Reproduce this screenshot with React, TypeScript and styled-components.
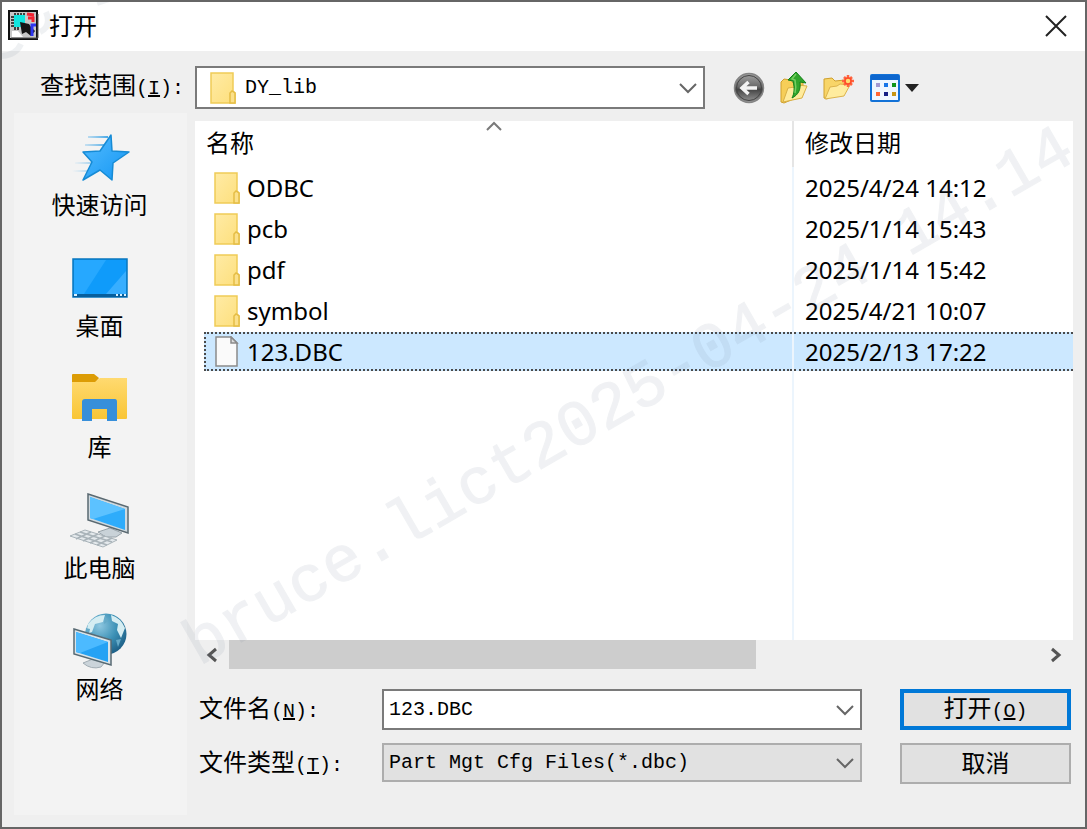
import React, { useState } from "react";
import styled, { createGlobalStyle, css } from "styled-components";

const uiFont = `"Noto Sans", "Noto Sans CJK SC", sans-serif`;
const monoFont = `"Liberation Mono", "Noto Sans CJK SC", monospace`;

const GlobalStyle = createGlobalStyle`
  *, *::before, *::after { box-sizing: border-box; }
  body { margin: 0; font-family: ${uiFont}; font-size: 24px; color: #000; }
  button, input, select { font: inherit; color: inherit; margin: 0; border-radius: 0; }
`;

const DialogFrame = styled.main`
  position: relative;
  display: flex;
  flex-direction: column;
  min-height: 100vh;
  background: #efefef;
  border: 2px solid #666;
  overflow: hidden;
`;

const TitleBar = styled.header`
  display: flex;
  align-items: center;
  height: 49px;
  padding: 0 18px 2px 6px;
  background: #fff;
`;

const Title = styled.h1`
  flex: 1;
  margin: 0 0 0 10px;
  font-size: 24px;
  font-weight: 400;
  line-height: 32px;
`;

const IconButton = styled.button`
  display: flex;
  align-items: center;
  justify-content: center;
  padding: 0;
  border: 0;
  background: none;
`;

const DialogBody = styled.div`
  display: flex;
  flex: 1;
  flex-direction: column;
  gap: 4px;
  padding: 15px 12px 12px;
`;

const LookInRow = styled.div`
  display: grid;
  grid-template-columns: 173px minmax(0, 1fr) 360px;
  column-gap: 8px;
  height: 43px;
`;

const FieldLabel = styled.label<{ $indent: number }>`
  height: 40px;
  padding-left: ${(p) => p.$indent}px;
  font-family: ${monoFont};
  font-size: 24px;
  line-height: 44px;
  white-space: nowrap;
`;

const Latin = styled.span`
  font-size: 20px;
`;

const ComboBox = styled.div<{ $readOnly?: boolean; $height: number }>`
  position: relative;
  display: flex;
  align-items: center;
  min-width: 0;
  height: ${(p) => p.$height}px;
  border: 2px solid ${(p) => (p.$readOnly ? "#adadad" : "#7a7a7a")};
  background: ${(p) => (p.$readOnly ? "#e1e1e1" : "#fff")};
`;

const comboText = css`
  flex: 1;
  min-width: 0;
  height: 100%;
  padding: 0 40px 0 5px;
  border: 0;
  outline: 0;
  background: transparent;
  appearance: none;
  font-family: ${monoFont};
  font-size: 20px;
`;

const ComboSelect = styled.select`
  ${comboText}
`;

const ComboInput = styled.input`
  ${comboText}
`;

const ComboArrow = styled.span`
  position: absolute;
  right: 6px;
  display: flex;
  pointer-events: none;
`;

const ComboIcon = styled.span`
  display: flex;
  padding: 0 4px 0 13px;
`;

const Toolbar = styled.div`
  display: flex;
  align-items: center;
  gap: 15px;
  padding-left: 20px;
`;

const Columns = styled.div`
  display: grid;
  flex: 1;
  grid-template-columns: 173px minmax(0, 1fr);
  column-gap: 8px;
`;

const Places = styled.nav`
  display: flex;
  flex-direction: column;
  gap: 25px;
  padding: 14px 2px 0 0;
  background: #f3f3f3;
`;

const Place = styled.button`
  display: flex;
  flex-direction: column;
  align-items: center;
  padding: 0;
  border: 0;
  background: none;
  line-height: 36px;
`;

const Content = styled.section`
  display: flex;
  flex-direction: column;
  min-width: 0;
  padding-top: 8px;
`;

const FileList = styled.div`
  display: flex;
  min-height: 519px;
  background: #fff;
`;

const FileTable = styled.table`
  width: 100%;
  border-collapse: separate;
  border-spacing: 0;
  table-layout: fixed;
`;

const HeaderCell = styled.th<{ $width: string; $divided?: boolean }>`
  position: relative;
  width: ${(p) => p.$width};
  height: 46px;
  padding: 0 11px;
  border-left: ${(p) => (p.$divided ? "2px solid #e5e5e5" : "0")};
  font-weight: 400;
  line-height: 44px;
  text-align: left;
  vertical-align: top;
`;

const SortMark = styled.span`
  position: absolute;
  top: 0;
  left: 0;
  display: flex;
  justify-content: center;
  width: 100%;
`;

const NameCell = styled.td`
  height: 41px;
  padding: 0 0 0 9px;
`;

const DateCell = styled.td`
  height: 41px;
  padding: 0;
  border-left: 2px solid #ecf5fd;
`;

const CellBox = styled.div<{ $selected: boolean; $first?: boolean }>`
  display: flex;
  align-items: center;
  gap: 7px;
  height: 39px;
  padding-left: ${(p) => (p.$first ? 10 : 11)}px;
  background: ${(p) => (p.$selected ? "#cce8ff" : "transparent")};
  white-space: nowrap;
  ${(p) =>
    p.$selected &&
    css`
      border-top: 2px dotted #4a4a4a;
      border-bottom: 2px dotted #4a4a4a;
    `}
  ${(p) =>
    p.$selected &&
    p.$first &&
    css`
      padding-left: 8px;
      border-left: 2px dotted #4a4a4a;
    `}
`;

const FillCell = styled.td<{ $divided?: boolean }>`
  padding: 0;
  border-left: ${(p) => (p.$divided ? "2px solid #ecf5fd" : "0")};
`;

const ScrollBar = styled.div`
  display: flex;
  height: 29px;
`;

const ScrollArrow = styled(IconButton)`
  width: 34px;
`;

const ScrollTrack = styled.div`
  flex: 1;
`;

const ScrollThumb = styled.div`
  width: 65%;
  height: 100%;
  background: #cdcdcd;
`;

const FileForm = styled.form`
  display: grid;
  grid-template-columns: 187px minmax(0, 1fr) 209px;
  row-gap: 13px;
  padding: 20px 2px 0 0;
`;

const ActionButton = styled.button<{ $primary?: boolean }>`
  height: 41px;
  margin-left: 38px;
  padding: 4px 0 0;
  border: ${(p) => (p.$primary ? "4px solid #0078d7" : "2px solid #adadad")};
  background: #e1e1e1;
  font-family: ${monoFont};
  font-size: 24px;
  line-height: 28px;
`;

const Watermark = styled.div`
  position: absolute;
  top: 48%;
  left: 58%;
  transform: translate(-50%, -50%) rotate(-30deg);
  color: #64738c;
  -webkit-text-stroke: 1px #64738c;
  opacity: 0.09;
  font-family: "Liberation Mono", monospace;
  font-size: 65px;
  line-height: 72px;
  white-space: nowrap;
  pointer-events: none;
`;

const WatermarkTail = styled.svg`
  position: absolute;
  top: 0;
  left: 0;
  pointer-events: none;
`;

const AppIcon = () => (
  <svg width="31" height="31" viewBox="0 0 31 31" aria-hidden="true">
    <rect x="1" y="1" width="28" height="28" fill="#c8c8c8" stroke="#111" strokeWidth="2" />
    <path d="M3 28h27V4" fill="none" stroke="#555" strokeWidth="1" />
    <path d="M4 21h6l5 6H4z" fill="#fff" />
    <path d="M7 3v3M10 3v3M13 3v3M16 3v3M3 7h3M3 10h3M3 13h3M3 16h3M7 17v3M10 17v3" stroke="#111" strokeWidth="1.5" />
    <rect x="6" y="5" width="11" height="12" fill="#10e5df" />
    <path d="M12 12l9 2 2 3 4 4-4 5-5-4-4 2z" fill="#151515" />
    <path d="M19 4l7 1M20 8h5v4" fill="none" stroke="#f32231" strokeWidth="3" />
    <path d="M28 15h-4v11" fill="none" stroke="#2d36ef" strokeWidth="3" />
  </svg>
);

const CloseIcon = () => (
  <svg width="22" height="22" viewBox="0 0 22 22" aria-hidden="true">
    <path d="M1 1l20 20M21 1L1 21" stroke="#222" strokeWidth="2" />
  </svg>
);

const Chevron = () => (
  <svg width="18" height="12" viewBox="0 0 18 12" aria-hidden="true">
    <path d="M1 2l8 8 8-8" fill="none" stroke="#666" strokeWidth="2" />
  </svg>
);

const SortIcon = () => (
  <svg width="16" height="10" viewBox="0 0 16 10" aria-hidden="true">
    <path d="M1 9l7-7 7 7" fill="none" stroke="#7a7a7a" strokeWidth="2" />
  </svg>
);

const ScrollChevron = ({ right }: { right?: boolean }) => (
  <svg width="12" height="16" viewBox="0 0 12 16" aria-hidden="true">
    <path d={right ? "M2 2l7 6-7 6" : "M10 2L3 8l7 6"} fill="none" stroke="#555" strokeWidth="3" />
  </svg>
);

const FolderIcon = () => (
  <svg width="26" height="32" viewBox="0 0 26 32" aria-hidden="true">
    <defs>
      <linearGradient id="folderFace" x1="0" y1="0" x2="1" y2="1">
        <stop offset="0" stopColor="#ffeba5" />
        <stop offset="1" stopColor="#fddf7c" />
      </linearGradient>
    </defs>
    <path d="M1 1h22v18l2 2v10H1z" fill="url(#folderFace)" stroke="#efcb57" strokeWidth="1.5" />
    <path d="M20 31V21l2-2 3 2v10z" fill="#fbe08a" stroke="#e5bd45" strokeWidth="1.5" />
  </svg>
);

const DocumentIcon = () => (
  <svg width="26" height="32" viewBox="0 0 26 32" aria-hidden="true">
    <path d="M2 1h15l6 6v23H2z" fill="#fafafa" stroke="#8a8a8a" strokeWidth="1.5" />
    <path d="M17 1v6h6z" fill="#dcdcdc" stroke="#8a8a8a" strokeWidth="1.5" />
  </svg>
);

const BackIcon = () => (
  <svg width="32" height="32" viewBox="0 0 32 32" aria-hidden="true">
    <defs>
      <linearGradient id="backFace" x1="0" y1="0" x2="0" y2="1">
        <stop offset="0" stopColor="#a5a5a5" />
        <stop offset="0.45" stopColor="#6a6a6a" />
        <stop offset="0.55" stopColor="#444" />
        <stop offset="1" stopColor="#9a9a9a" />
      </linearGradient>
    </defs>
    <circle cx="16" cy="16" r="14.5" fill="url(#backFace)" stroke="#858585" strokeWidth="1.5" />
    <circle cx="16" cy="16" r="12.5" fill="none" stroke="#444" strokeWidth="1" />
    <path d="M24 16H10M15.500 10L9 16l6.500 6" fill="none" stroke="#f3f3f3" strokeWidth="3.500" />
  </svg>
);

const UpIcon = () => (
  <svg width="28" height="33" viewBox="0 0 28 33" aria-hidden="true">
    <path d="M1 31V11l3-3 7 1 2 3 10-3v15L4 32z" fill="#f6ce58" stroke="#cfa02d" />
    <path d="M3 31l5-14 7-1 3-2 9 1-5 12z" fill="#ffeb9c" stroke="#d9b045" />
    <path d="M16 1L8 9l5 1c2 8 1 13-1 17 6-3 9-8 8-16l6 1z" fill="#30a52c" stroke="#128018" />
    <path d="M16 3l-4 5 3 1c1 5 1 9 0 13" fill="none" stroke="#75ce61" strokeWidth="1.5" />
  </svg>
);

const NewFolderIcon = () => (
  <svg width="32" height="28" viewBox="0 0 32 28" aria-hidden="true">
    <path d="M1 24V5l8-1 3 3 10-1v6L4 25z" fill="#f8d568" stroke="#cfa02d" />
    <path d="M2 25l5-12 7-1 3-2 10 1-6 11z" fill="#ffec9e" stroke="#dcb34b" />
    <path d="M25 1v12M19 7h12M21 3l8 8M29 3l-8 8" stroke="#ff6540" strokeWidth="2.5" />
    <circle cx="25" cy="7" r="3" fill="#ffda70" stroke="#ff4a28" strokeWidth="1.5" />
  </svg>
);

const ViewsIcon = () => (
  <svg width="50" height="28" viewBox="0 0 50 28" aria-hidden="true">
    <rect x="1" y="1" width="28" height="26" rx="1" fill="#eff7ff" stroke="#1372d7" strokeWidth="2" />
    <rect x="1" y="1" width="28" height="5" fill="#0d66ce" />
    <path d="M6 9h4v4H6z" fill="#a39ad2" />
    <path d="M14 9h4v4h-4z" fill="#1876e8" />
    <path d="M22 9h4v4h-4z" fill="#119519" />
    <path d="M6 18h4v4H6z" fill="#ff6634" />
    <path d="M14 18h4v4h-4z" fill="#152086" />
    <path d="M22 18h4v4h-4z" fill="#c79514" />
    <path d="M35 10h14l-7 8z" fill="#222" />
  </svg>
);

const PlaceSvg = ({ children }: { children: React.ReactNode }) => (
  <svg width="60" height="60" viewBox="0 0 60 60" aria-hidden="true">
    {children}
  </svg>
);

const QuickAccessIcon = () => (
  <PlaceSvg>
    <defs>
      <linearGradient id="starFace" x1="0" y1="0" x2="1" y2="1">
        <stop offset="0" stopColor="#54bcff" />
        <stop offset="1" stopColor="#1496f3" />
      </linearGradient>
      <linearGradient id="starTrail" x1="0" y1="0" x2="1" y2="0">
        <stop offset="0" stopColor="#8cc8ee" stopOpacity="0" />
        <stop offset="1" stopColor="#4aa9e6" />
      </linearGradient>
    </defs>
    <path d="M18 9h20v2H18zM15 17h20v2H15zM5 35h18v2H5zM2 43h18v2H2z" fill="url(#starTrail)" />
    <path
      d="M41 8l1 16 17 1-16 11-1 17-12-10-17 10 9-18-9-10 17-1z"
      fill="url(#starFace)"
      stroke="#168bd5"
      strokeWidth="1.5"
      strokeLinejoin="round"
    />
  </PlaceSvg>
);

const DesktopIcon = () => (
  <PlaceSvg>
    <rect x="3" y="11" width="54" height="38" fill="#0f9bfa" stroke="#0877be" strokeWidth="1.5" />
    <path d="M4 12h32L14 46H4z" fill="#26a8ff" />
    <path d="M36 46l20-23v23z" fill="#37aeff" />
    <path d="M3 46h54v3H3z" fill="#075f9d" />
    <path d="M4 46h3v2H4zM46 46h2v2h-2zM50 46h2v2h-2zM54 46h2v2h-2z" fill="#d9f1ff" />
  </PlaceSvg>
);

const LibraryIcon = () => (
  <PlaceSvg>
    <defs>
      <linearGradient id="libraryFace" x1="0" y1="0" x2="0" y2="1">
        <stop offset="0" stopColor="#ffda70" />
        <stop offset="1" stopColor="#f9c535" />
      </linearGradient>
    </defs>
    <path d="M2 6q0-1 1-1h21l5 4-5 6H2z" fill="#dc9c05" />
    <path d="M2 13h23l5-4h27v40q0 1-1 1H3q-1 0-1-1z" fill="url(#libraryFace)" />
    <path d="M12 52V33q0-3 3-3h30q2 0 2 3v19H37V40H22v12z" fill="#378fda" />
  </PlaceSvg>
);

const ComputerIcon = () => (
  <PlaceSvg>
    <path d="M28 42l12-4 12 5-6 4H36z" fill="#c9d2d8" stroke="#98a3aa" />
    <path d="M18 4l40 13v26L18 30z" fill="#cfd9df" stroke="#5a6971" strokeWidth="1.5" />
    <path d="M20 7l35 12v21L20 28z" fill="#2eacfb" />
    <path d="M20 7l35 12-32 10-3-1z" fill="#5cc2ff" />
    <path d="M0 46l15-6 32 10-14 7z" fill="#e4e9ec" stroke="#a9b3b9" />
    <path d="M5 44l32 11M10 42l32 10M6 49l15-7M13 51l15-7M20 53l15-7M27 55l15-7" stroke="#a9b3b9" strokeWidth="1.5" />
  </PlaceSvg>
);

const NetworkIcon = () => (
  <PlaceSvg>
    <defs>
      <radialGradient id="globeFace" cx="0.35" cy="0.3" r="0.75">
        <stop offset="0" stopColor="#8ec7e0" />
        <stop offset="0.55" stopColor="#3c91b6" />
        <stop offset="1" stopColor="#1d5f86" />
      </radialGradient>
    </defs>
    <circle cx="36" cy="23" r="20.500" fill="url(#globeFace)" />
    <path d="M18 13q7-9 17-9l-2 7-8 2-3 8-6 2zM41 4q10 3 14 13l-4 10-4-8 1-6-6-3z" fill="#d5edf2" />
    <path d="M16 17l4 1-1 5-4 1zM35 5l3 5-4 3zM46 29l5-1-3 8z" fill="#65aac8" />
    <path d="M13 52l10-4 12 3-4 5q-10 3-18-4z" fill="#cbd4da" stroke="#a2adb4" />
    <path d="M4 18l37 11v25L4 43z" fill="#dae4e9" stroke="#586a73" strokeWidth="1.5" />
    <path d="M6 21l32 10v20L6 41z" fill="#25a2f4" />
    <path d="M6 21l32 10L10 42l-4-1z" fill="#4cbaff" />
  </PlaceSvg>
);

const places = [
  { name: "快速访问", icon: <QuickAccessIcon /> },
  { name: "桌面", icon: <DesktopIcon /> },
  { name: "库", icon: <LibraryIcon /> },
  { name: "此电脑", icon: <ComputerIcon /> },
  { name: "网络", icon: <NetworkIcon /> },
];

const files = [
  { name: "ODBC", date: "2025/4/24 14:12", folder: true },
  { name: "pcb", date: "2025/1/14 15:43", folder: true },
  { name: "pdf", date: "2025/1/14 15:42", folder: true },
  { name: "symbol", date: "2025/4/21 10:07", folder: true },
  { name: "123.DBC", date: "2025/2/13 17:22", folder: false },
];

export default function App() {
  const [fileName, setFileName] = useState("123.DBC");

  return (
    <>
      <GlobalStyle />
      <DialogFrame>
        <TitleBar>
          <AppIcon />
          <Title>打开</Title>
          <IconButton type="button" aria-label="关闭">
            <CloseIcon />
          </IconButton>
        </TitleBar>
        <DialogBody>
          <LookInRow>
            <FieldLabel htmlFor="look-in" $indent={26}>
              查找范围<Latin>(<u>I</u>):</Latin>
            </FieldLabel>
            <ComboBox $height={43}>
              <ComboIcon>
                <FolderIcon />
              </ComboIcon>
              <ComboSelect id="look-in">
                <option>DY_lib</option>
              </ComboSelect>
              <ComboArrow>
                <Chevron />
              </ComboArrow>
            </ComboBox>
            <Toolbar>
              <IconButton type="button" aria-label="后退">
                <BackIcon />
              </IconButton>
              <IconButton type="button" aria-label="向上一级">
                <UpIcon />
              </IconButton>
              <IconButton type="button" aria-label="新建文件夹">
                <NewFolderIcon />
              </IconButton>
              <IconButton type="button" aria-label="查看菜单">
                <ViewsIcon />
              </IconButton>
            </Toolbar>
          </LookInRow>
          <Columns>
            <Places>
              {places.map((place) => (
                <Place type="button" key={place.name}>
                  {place.icon}
                  {place.name}
                </Place>
              ))}
            </Places>
            <Content>
              <FileList>
                <FileTable>
                  <thead>
                    <tr>
                      <HeaderCell scope="col" $width="68%">
                        名称
                        <SortMark>
                          <SortIcon />
                        </SortMark>
                      </HeaderCell>
                      <HeaderCell scope="col" $width="32%" $divided>
                        修改日期
                      </HeaderCell>
                    </tr>
                  </thead>
                  <tbody>
                    {files.map((file) => {
                      const selected = file.name === fileName;
                      return (
                        <tr key={file.name} onClick={() => setFileName(file.name)}>
                          <NameCell>
                            <CellBox $selected={selected} $first>
                              {file.folder ? <FolderIcon /> : <DocumentIcon />}
                              {file.name}
                            </CellBox>
                          </NameCell>
                          <DateCell>
                            <CellBox $selected={selected}>{file.date}</CellBox>
                          </DateCell>
                        </tr>
                      );
                    })}
                    <tr aria-hidden="true">
                      <FillCell />
                      <FillCell $divided />
                    </tr>
                  </tbody>
                </FileTable>
              </FileList>
              <ScrollBar>
                <ScrollArrow type="button" aria-label="向左滚动">
                  <ScrollChevron />
                </ScrollArrow>
                <ScrollTrack>
                  <ScrollThumb />
                </ScrollTrack>
                <ScrollArrow type="button" aria-label="向右滚动">
                  <ScrollChevron right />
                </ScrollArrow>
              </ScrollBar>
              <FileForm onSubmit={(e) => e.preventDefault()}>
                <FieldLabel htmlFor="file-name" $indent={4}>
                  文件名<Latin>(<u>N</u>):</Latin>
                </FieldLabel>
                <ComboBox $height={41}>
                  <ComboInput
                    id="file-name"
                    type="text"
                    value={fileName}
                    onChange={(e) => setFileName(e.target.value)}
                  />
                  <ComboArrow>
                    <Chevron />
                  </ComboArrow>
                </ComboBox>
                <ActionButton type="submit" $primary>
                  打开<Latin>(<u>O</u>)</Latin>
                </ActionButton>
                <FieldLabel htmlFor="file-type" $indent={4}>
                  文件类型<Latin>(<u>T</u>):</Latin>
                </FieldLabel>
                <ComboBox $height={39} $readOnly>
                  <ComboSelect id="file-type">
                    <option>Part Mgt Cfg Files(*.dbc)</option>
                  </ComboSelect>
                  <ComboArrow>
                    <Chevron />
                  </ComboArrow>
                </ComboBox>
                <ActionButton type="button">取消</ActionButton>
              </FileForm>
            </Content>
          </Columns>
        </DialogBody>
        <Watermark aria-hidden="true">bruce.lict2025-04-24 14.14</Watermark>
        <WatermarkTail width="120" height="70" viewBox="0 0 120 70" aria-hidden="true">
          <path d="M0 54q14-1 19-12M38 30q12-6 6-20M95 1l12-4" fill="none" stroke="#64738c" strokeOpacity="0.1" strokeWidth="6" />
        </WatermarkTail>
      </DialogFrame>
    </>
  );
}
